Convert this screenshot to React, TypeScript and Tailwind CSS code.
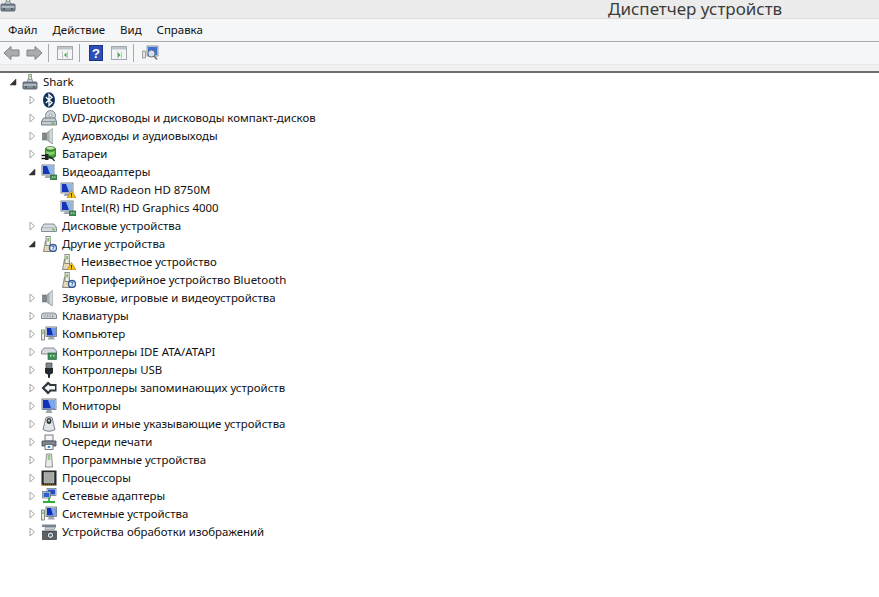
import type { ReactNode } from 'react'

type IconName =
  | 'computer' | 'bluetooth' | 'dvd' | 'audio' | 'battery' | 'display' | 'displayWarn'
  | 'disk' | 'other' | 'otherWarn' | 'keyboard' | 'pc' | 'ide' | 'usb' | 'storage'
  | 'monitor' | 'mouse' | 'printer' | 'firmware' | 'cpu' | 'network' | 'system' | 'camera'

function Badge({ warn }: { warn?: boolean }) {
  return warn ? (
    <>
      <path d="M11.5 8.5 L16 16 H7 Z" fill="#f5c518" stroke="#a87f10" strokeWidth="0.7" />
      <rect x="11" y="11" width="1" height="2.8" fill="#333" />
      <rect x="11" y="14.3" width="1" height="1" fill="#333" />
    </>
  ) : (
    <>
      <rect x="9.5" y="11" width="6.5" height="5" fill="#3f8f58" stroke="#1f5a33" strokeWidth="0.6" />
      <rect x="11" y="12.5" width="1.2" height="1.2" fill="#d9e9a0" />
      <rect x="13.2" y="12.5" width="1.2" height="1.2" fill="#d9e9a0" />
    </>
  )
}

function Screen() {
  return (
    <>
      <rect x="1" y="1" width="12" height="10" fill="#dfe6ee" stroke="#5f6b76" strokeWidth="0.8" />
      <path d="M2 2 H12 V10 H2 Z" fill="#1436b8" />
      <path d="M6 2 H12 V10 H9 Z" fill="#8fb7ea" />
      <path d="M5 11.5 H9 L10.5 14 H3.5 Z" fill="#9ea7af" />
    </>
  )
}

function Question() {
  return (
    <>
      <circle cx="12" cy="12" r="3.9" fill="#2f63a8" stroke="#1f3f78" strokeWidth="0.6" />
      <circle cx="12" cy="12" r="2.8" fill="#e6eef8" />
      <path d="M10.9 11 Q11 10 12 10 Q13.2 10 13.1 11 Q13 11.8 12 12.2 V13" fill="none" stroke="#1f4f98" strokeWidth="0.9" />
      <rect x="11.6" y="13.4" width="0.9" height="0.9" fill="#1f4f98" />
    </>
  )
}

function TowerDoc() {
  return (
    <>
      <path d="M2.5 15.5 L4.5 5 H9 L10.5 15.5 Z" fill="#e3d9b8" stroke="#77735f" strokeWidth="0.8" />
      <rect x="5" y="0.5" width="4.2" height="9" fill="#eef2ea" stroke="#6f766c" strokeWidth="0.8" />
      <rect x="6.3" y="2" width="1.6" height="3.5" fill="#7cb955" />
    </>
  )
}

function DeviceIcon({ name }: { name: IconName }) {
  const parts: Record<IconName, ReactNode> = {
    computer: (
      <>
        <rect x="1" y="8" width="14" height="7" rx="1" fill="#7f8d99" stroke="#3d4a56" strokeWidth="0.8" />
        <path d="M1.5 11 H14.5" stroke="#dfe5ea" strokeWidth="1" />
        <path d="M5 8 L6.5 4 H9.5 L11 8 Z" fill="#c6ced6" stroke="#5f6b76" strokeWidth="0.6" />
        <rect x="6.8" y="0.5" width="2.6" height="5" fill="#eef3ee" stroke="#5b6a5b" strokeWidth="0.6" />
        <rect x="7.6" y="1.5" width="1" height="2" fill="#5cb04a" />
        <rect x="3" y="12.4" width="2" height="1" fill="#2f3a44" />
        <rect x="11" y="12.4" width="2" height="1" fill="#2f3a44" />
      </>
    ),
    bluetooth: (
      <>
        <ellipse cx="8" cy="8" rx="6" ry="7.8" fill="#10305a" />
        <path d="M4.8 5 L11 10.7 L8 13.5 V2.5 L11 5.3 L4.8 11" fill="none" stroke="#fff" strokeWidth="1.3" />
      </>
    ),
    dvd: (
      <>
        <circle cx="9.5" cy="5.5" r="5" fill="#cdd4da" stroke="#68747e" strokeWidth="0.8" />
        <circle cx="9.5" cy="5.5" r="1.4" fill="#fff" stroke="#5d6973" strokeWidth="0.6" />
        <path d="M2.5 8 H14 L15.5 11.5 V15 H0.5 V11.5 Z" fill="#c5ccd2" stroke="#59646e" strokeWidth="0.8" />
        <path d="M1 11.5 H15" stroke="#7b8791" strokeWidth="0.8" />
        <rect x="10.5" y="12.6" width="3" height="1.2" fill="#58a83c" />
      </>
    ),
    audio: (
      <>
        <rect x="1.5" y="5" width="4" height="7" fill="#7f888b" stroke="#565e61" strokeWidth="0.5" />
        <path d="M5.5 5 L11.5 0.5 V16 L5.5 12 Z" fill="#a7afb1" stroke="#687174" strokeWidth="0.5" />
        <path d="M8.5 3.5 V13 L11.5 15.5 V0.8 Z" fill="#d2d7d7" />
      </>
    ),
    battery: (
      <>
        <ellipse cx="9.5" cy="2.5" rx="4.8" ry="2" fill="#c9e6b4" stroke="#2d6a22" strokeWidth="0.7" />
        <path d="M4.5 2.5 V10.5 Q9.5 14.5 14.5 10.5 V2.5 Q9.5 6 4.5 2.5 Z" fill="#3f9f30" stroke="#23591a" strokeWidth="0.7" />
        <path d="M5.5 5 Q9 7.5 13.5 5 V8 Q9 10 5.5 8 Z" fill="#8fd070" />
        <path d="M0.5 9.5 H4.5" stroke="#111" strokeWidth="1.4" />
        <path d="M0.5 12.5 H4.5" stroke="#111" strokeWidth="1.4" />
        <path d="M4 8 H7.5 V14 H4 Z" fill="#22272b" />
        <path d="M7.5 11 Q11 11 13.5 15" stroke="#22272b" strokeWidth="1.4" fill="none" />
      </>
    ),
    display: <><Screen /><Badge /></>,
    displayWarn: <><Screen /><Badge warn /></>,
    disk: (
      <>
        <path d="M3 6 H13 L15.5 9.5 V13.5 H0.5 V9.5 Z" fill="#d6dbdf" stroke="#6d7780" strokeWidth="0.8" />
        <path d="M1 9.8 H15" stroke="#98a1a8" strokeWidth="0.7" />
        <rect x="11" y="10.8" width="3" height="1.6" fill="#7dba5c" />
      </>
    ),
    other: <><TowerDoc /><Question /></>,
    otherWarn: <><TowerDoc /><Badge warn /></>,
    keyboard: (
      <>
        <path d="M3 5 H13 Q15.5 5 15.5 8 V10.5 H0.5 V8 Q0.5 5 3 5 Z" fill="#e0e3e6" stroke="#5f6972" strokeWidth="0.8" />
        <path d="M2.5 7 H13.5 M2.5 8.8 H13.5" stroke="#5f6972" strokeWidth="0.9" strokeDasharray="1 0.7" />
      </>
    ),
    pc: (
      <>
        <rect x="0.5" y="4" width="3" height="10" fill="#e6ebe6" stroke="#5f6a5f" strokeWidth="0.7" />
        <rect x="1.4" y="5.5" width="1.2" height="2.5" fill="#5cb83e" />
        <rect x="5" y="1" width="10.5" height="9.5" fill="#dfe6ee" stroke="#5f6b76" strokeWidth="0.8" />
        <path d="M6 2 H14.5 V9.5 H6 Z" fill="#1030bc" />
        <path d="M10 2 H14.5 V9.5 H12 Z" fill="#6e9be8" />
        <path d="M8 11 H12.5 L14 13.5 H6.5 Z" fill="#9ea7af" />
      </>
    ),
    ide: (
      <>
        <path d="M3 4 H13 L15.5 7 V10 H0.5 V7 Z" fill="#d6dbdf" stroke="#6d7780" strokeWidth="0.8" />
        <rect x="7" y="9" width="8.5" height="6.5" fill="#3f8f58" stroke="#1f5a33" strokeWidth="0.6" />
        <rect x="9" y="11" width="1.5" height="1.5" fill="#d9e9a0" />
        <rect x="12" y="11" width="1.5" height="1.5" fill="#d9e9a0" />
      </>
    ),
    usb: (
      <>
        <path d="M5 1 H11 V9 H5 Z" fill="#7f868b" stroke="#40464a" strokeWidth="0.7" />
        <path d="M4 6 H12 V11 L9.5 12.5 H6.5 L4 11 Z" fill="#24292e" />
        <rect x="7" y="12" width="2" height="3.8" fill="#24292e" />
      </>
    ),
    storage: (
      <>
        <path d="M0.5 8 L7 1.5 L10 4 H15.5 V11.5 H10 L7 14.5 Z" fill="#30363b" />
        <path d="M3.5 8 L7.5 4.5 L8.5 6 H14 V9.5 H8.5 L7.5 11.5 Z" fill="#f2f4f5" />
      </>
    ),
    monitor: (
      <>
        <rect x="1" y="1" width="14" height="10.5" fill="#dfe6ee" stroke="#5f6b76" strokeWidth="0.8" />
        <path d="M2 2 H14 V10.5 H2 Z" fill="#1030bc" />
        <path d="M7 2 H14 V10.5 H10 Z" fill="#7ea6ea" />
        <path d="M6 12 H10 L11.5 15 H4.5 Z" fill="#9ea7af" />
      </>
    ),
    mouse: (
      <>
        <path d="M5 1.5 Q8 0 11 1.5 Q12.5 8 14 13.5 Q8 17 2 13.5 Q3.5 8 5 1.5 Z" fill="#e2e5e8" stroke="#555e66" strokeWidth="0.8" />
        <ellipse cx="8" cy="5" rx="2.4" ry="3" fill="#30373d" />
        <ellipse cx="8" cy="4.6" rx="0.9" ry="1.4" fill="#c5ccd2" />
      </>
    ),
    printer: (
      <>
        <rect x="4" y="1" width="8" height="6" fill="#f4f6f8" stroke="#555e66" strokeWidth="0.8" />
        <path d="M1 7 H15 V12 H1 Z" fill="#7d8790" stroke="#3e474e" strokeWidth="0.8" />
        <rect x="4" y="10.5" width="8" height="5" fill="#f4f6f8" stroke="#555e66" strokeWidth="0.8" />
        <rect x="6.8" y="12" width="2.4" height="1.8" fill="#2f7fc0" />
      </>
    ),
    firmware: (
      <>
        <path d="M4.5 15 L5.5 2 H10.5 L11.5 15 Z" fill="#e9ecea" stroke="#747b75" strokeWidth="0.8" />
        <rect x="7" y="3.5" width="2" height="4" fill="#a9d48e" stroke="#6c9c52" strokeWidth="0.4" />
      </>
    ),
    cpu: (
      <>
        <rect x="0.5" y="0.5" width="15" height="15" fill="#24272b" />
        <rect x="3" y="2.5" width="10" height="10.5" fill="#a6a8a6" stroke="#d0d1cf" strokeWidth="0.5" />
        <path d="M1 15 H15" stroke="#c79a3a" strokeWidth="0.9" strokeDasharray="1 1" />
      </>
    ),
    network: (
      <>
        <rect x="6" y="0.5" width="9" height="7" fill="#dfe6ee" stroke="#5f6b76" strokeWidth="0.7" />
        <rect x="7" y="1.5" width="7" height="5" fill="#1f4ac4" />
        <rect x="1.5" y="3.5" width="8" height="6.5" fill="#dfe6ee" stroke="#5f6b76" strokeWidth="0.7" />
        <rect x="2.5" y="4.5" width="6" height="4.5" fill="#2f5fd4" />
        <path d="M2 14 H14 M8 9.5 V14" stroke="#2eae3e" strokeWidth="1.8" />
      </>
    ),
    system: (
      <>
        <rect x="0.5" y="4" width="3" height="10" fill="#e6ebe6" stroke="#5f6a5f" strokeWidth="0.7" />
        <rect x="1.4" y="5.5" width="1.2" height="2.5" fill="#5cb83e" />
        <rect x="5" y="1" width="10.5" height="9.5" fill="#dfe6ee" stroke="#5f6b76" strokeWidth="0.8" />
        <path d="M6 2 H14.5 V9.5 H6 Z" fill="#1030bc" />
        <path d="M10 2 H14.5 V9.5 H12 Z" fill="#7ea6ea" />
        <path d="M8 11 H12.5 L14 13.5 H6.5 Z" fill="#9ea7af" />
      </>
    ),
    camera: (
      <>
        <path d="M1 0.5 H15 V3 H1 Z" fill="#7d8790" />
        <path d="M4 3 H15 L13 6 H4 Z" fill="#c5ccd2" stroke="#5f6972" strokeWidth="0.4" />
        <rect x="1.5" y="7" width="14" height="8.5" fill="#5a6268" stroke="#22272b" strokeWidth="0.6" />
        <circle cx="9.5" cy="11.2" r="3.2" fill="#e2e7ea" stroke="#22272b" strokeWidth="0.8" />
        <circle cx="9.5" cy="11.2" r="1.4" fill="#4c6478" />
      </>
    ),
  }
  return (
    <svg width="16" height="16" viewBox="0 0 16 16" className="shrink-0">
      {parts[name]}
    </svg>
  )
}

function Arrow({ open }: { open?: boolean }) {
  return (
    <svg width="8" height="10" viewBox="0 0 8 10" className="shrink-0">
      {open ? (
        <path d="M1 8 L7 8 L7 2 Z" fill="#333" stroke="#333" strokeWidth="0.5" />
      ) : (
        <path d="M2 1 L6.5 5 L2 9 Z" fill="#fff" stroke="#a6a6a6" strokeWidth="1" />
      )}
    </svg>
  )
}

type Node = { label: string; icon: IconName; level: number; open?: boolean; leaf?: boolean }

const nodes: Node[] = [
  { label: 'Shark', icon: 'computer', level: 0, open: true },
  { label: 'Bluetooth', icon: 'bluetooth', level: 1 },
  { label: 'DVD-дисководы и дисководы компакт-дисков', icon: 'dvd', level: 1 },
  { label: 'Аудиовходы и аудиовыходы', icon: 'audio', level: 1 },
  { label: 'Батареи', icon: 'battery', level: 1 },
  { label: 'Видеоадаптеры', icon: 'display', level: 1, open: true },
  { label: 'AMD Radeon HD 8750M', icon: 'displayWarn', level: 2, leaf: true },
  { label: 'Intel(R) HD Graphics 4000', icon: 'display', level: 2, leaf: true },
  { label: 'Дисковые устройства', icon: 'disk', level: 1 },
  { label: 'Другие устройства', icon: 'other', level: 1, open: true },
  { label: 'Неизвестное устройство', icon: 'otherWarn', level: 2, leaf: true },
  { label: 'Периферийное устройство Bluetooth', icon: 'other', level: 2, leaf: true },
  { label: 'Звуковые, игровые и видеоустройства', icon: 'audio', level: 1 },
  { label: 'Клавиатуры', icon: 'keyboard', level: 1 },
  { label: 'Компьютер', icon: 'pc', level: 1 },
  { label: 'Контроллеры IDE ATA/ATAPI', icon: 'ide', level: 1 },
  { label: 'Контроллеры USB', icon: 'usb', level: 1 },
  { label: 'Контроллеры запоминающих устройств', icon: 'storage', level: 1 },
  { label: 'Мониторы', icon: 'monitor', level: 1 },
  { label: 'Мыши и иные указывающие устройства', icon: 'mouse', level: 1 },
  { label: 'Очереди печати', icon: 'printer', level: 1 },
  { label: 'Программные устройства', icon: 'firmware', level: 1 },
  { label: 'Процессоры', icon: 'cpu', level: 1 },
  { label: 'Сетевые адаптеры', icon: 'network', level: 1 },
  { label: 'Системные устройства', icon: 'system', level: 1 },
  { label: 'Устройства обработки изображений', icon: 'camera', level: 1 },
]

function Row({ node }: { node: Node }) {
  const indent = ['pl-[9px]', 'pl-[28px]', 'pl-[47px]'][node.level]
  return (
    <div className={`flex h-[18px] items-center ${indent}`}>
      <div className="flex w-[13px] shrink-0">{node.leaf ? null : <Arrow open={node.open} />}</div>
      <DeviceIcon name={node.icon} />
      <span className="ml-[5px] whitespace-nowrap text-[11.45px] text-[#111]">{node.label}</span>
    </div>
  )
}

function NavArrow({ back }: { back?: boolean }) {
  return (
    <svg width="17" height="16" viewBox="0 0 17 16">
      <path
        d={back ? 'M1 8 L8 1.5 V5 H16 V11 H8 V14.5 Z' : 'M16 8 L9 1.5 V5 H1 V11 H9 V14.5 Z'}
        fill="#a9adb0"
        stroke="#7f8386"
        strokeWidth="1"
      />
    </svg>
  )
}

function PaneIcon({ right }: { right?: boolean }) {
  return (
    <svg width="16" height="14" viewBox="0 0 16 14">
      <rect x="0.5" y="0.5" width="15" height="13" fill="#f4f5f6" stroke="#a4a9ad" />
      <rect x="1" y="1" width="14" height="2.5" fill="#bfc4c8" />
      <path d={right ? 'M6.5 5.5 V12.5 M10.5 5.5 V12.5' : 'M5.5 5.5 V12.5 M10.5 5.5 V12.5'} stroke="#bfc4c8" />
      <path d={right ? 'M7 6.5 L9.5 9 L7 11.5 Z' : 'M9.5 6.5 L7 9 L9.5 11.5 Z'} fill="#3fae3f" />
    </svg>
  )
}

const Sep = () => <div className="mx-[5px] h-[18px] w-px bg-[#a9a9a9]" />

export default function App() {
  return (
    <div className="h-[597px] w-[879px] overflow-hidden bg-white font-['Noto_Sans','Open_Sans',sans-serif]">
      <div className="flex h-[19px] items-start border-b border-[#dedede] bg-[#ececec]">
        <div className="-mt-[4px] shrink-0">
          <DeviceIcon name="computer" />
        </div>
        <div className="ml-[592px] whitespace-nowrap text-[17px] leading-[18px] text-[#3c3c3c]">
          Диспетчер устройств
        </div>
      </div>

      <div className="flex h-[23px] items-center gap-[15px] border-b border-[#ababab] bg-[#f5f6f7] pl-[8px] text-[11.45px] text-[#111]">
        <span>Файл</span>
        <span>Действие</span>
        <span>Вид</span>
        <span>Справка</span>
      </div>

      <div className="flex h-[23px] items-center border-b border-[#e6e6e6] bg-[#f5f6f7] pl-[3px]">
        <NavArrow back />
        <div className="ml-[6px]">
          <NavArrow />
        </div>
        <Sep />
        <div className="ml-[3px]">
          <PaneIcon />
        </div>
        <div className="ml-[1px]">
          <Sep />
        </div>
        <svg width="14" height="16" viewBox="0 0 14 16" className="ml-[4px]">
          <rect x="0.5" y="0.5" width="13" height="15" fill="#2d4fb8" stroke="#1c3384" />
          <text x="7" y="13" fontSize="13" fontWeight="700" textAnchor="middle" fill="#fff" fontFamily="Liberation Sans">?</text>
        </svg>
        <div className="ml-[8px]">
          <PaneIcon right />
        </div>
        <div className="ml-[1px]">
          <Sep />
        </div>
        <svg width="17" height="16" viewBox="0 0 17 16" className="ml-[3px]">
          <rect x="0.5" y="6" width="3" height="7" fill="#dfe3df" stroke="#7f8a7f" strokeWidth="0.7" />
          <rect x="5" y="1" width="11" height="10" fill="#d5dbe2" stroke="#7a848e" strokeWidth="0.8" />
          <rect x="6" y="2" width="9" height="8" fill="#3f6fd0" />
          <circle cx="9.5" cy="8.5" r="3.6" fill="#cfe0f4" stroke="#5a6a7a" strokeWidth="1" />
          <path d="M12 11 L15 14.5" stroke="#6a6f74" strokeWidth="1.6" />
        </svg>
      </div>

      <div className="h-[8px] border-b-2 border-[#6e6e6e] bg-[#f0f0f0]" />

      <div>
        {nodes.map((node) => (
          <Row key={node.label} node={node} />
        ))}
      </div>
    </div>
  )
}
